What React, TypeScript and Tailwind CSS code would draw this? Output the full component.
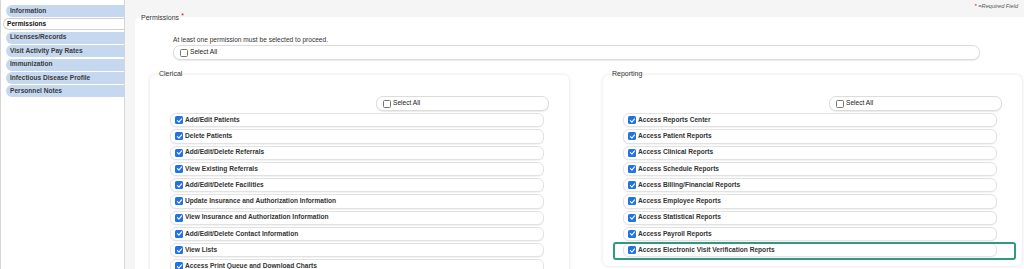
import React from "react";

const clerical = [
  "Add/Edit Patients",
  "Delete Patients",
  "Add/Edit/Delete Referrals",
  "View Existing Referrals",
  "Add/Edit/Delete Facilities",
  "Update Insurance and Authorization Information",
  "View Insurance and Authorization Information",
  "Add/Edit/Delete Contact Information",
  "View Lists",
  "Access Print Queue and Download Charts",
];

const reporting = [
  "Access Reports Center",
  "Access Patient Reports",
  "Access Clinical Reports",
  "Access Schedule Reports",
  "Access Billing/Financial Reports",
  "Access Employee Reports",
  "Access Statistical Reports",
  "Access Payroll Reports",
  "Access Electronic Visit Verification Reports",
];

const tabs = [
  "Information",
  "Permissions",
  "Licenses/Records",
  "Visit Activity Pay Rates",
  "Immunization",
  "Infectious Disease Profile",
  "Personnel Notes",
];

function Checked() {
  return (
    <span className="flex h-[8px] w-[8px] shrink-0 items-center justify-center rounded-[1.5px] bg-[#1f73e6]">
      <svg viewBox="0 0 10 10" className="h-[7px] w-[7px]">
        <polyline points="2,5.3 4.2,7.4 8,2.8" fill="none" stroke="#fff" strokeWidth="1.6" strokeLinecap="round" strokeLinejoin="round" />
      </svg>
    </span>
  );
}

function Unchecked() {
  return <span className="h-[8px] w-[8px] shrink-0 rounded-[1.5px] border border-[#777] bg-white" />;
}

function SelectAllBox({ className }: { className: string }) {
  return (
    <div className={"flex h-[15px] shrink-0 items-center gap-[2px] rounded-[7px] border border-[#dcdcdc] bg-white pl-[6px] shadow-[0_1px_1px_rgba(0,0,0,0.08)] " + className}>
      <Unchecked />
      <span className="text-[6.6px] leading-none text-[#222]">Select All</span>
    </div>
  );
}

function Row({ label, highlight }: { label: string; highlight?: boolean }) {
  return (
    <div className="relative flex h-[14.25px] shrink-0 items-center gap-[2px] rounded-[6px] border border-[#e2e2e2] bg-white pl-[4px] shadow-[0_1px_1px_rgba(0,0,0,0.05)]">
      <Checked />
      <span className="text-[6.6px] font-bold leading-none text-[#333]">{label}</span>
      {highlight && (
        <div className="pointer-events-none absolute -bottom-[4px] -left-[11px] -right-[20px] -top-[2px] rounded-[3px] border-2 border-[#2e9b7c]" />
      )}
    </div>
  );
}

function Column({ title, items, last }: { title: string; items: string[]; last?: boolean }) {
  return (
    <div className="flex w-[419px] shrink-0 flex-col">
      <div className="relative z-10 h-[8px] shrink-0 pl-[9px] text-[7px] leading-[8px] text-[#333]">{title}</div>
      <div className="-mt-[3px] flex shrink-0 flex-col rounded-[6px] bg-white pb-[9px] pt-[21px] shadow-[0_0_4px_rgba(0,0,0,0.12)]">
        <SelectAllBox className="ml-[226px] mr-[20px]" />
        <div className="mt-[2px] flex flex-col gap-[2px] pl-[20px] pr-[25px]">
          {items.map((it, i) => (
            <Row key={it} label={it} highlight={last && i === items.length - 1} />
          ))}
        </div>
      </div>
    </div>
  );
}

export default function App() {
  return (
    <div className="flex h-[269px] w-[1024px] overflow-hidden bg-[#f5f5f5] font-['Liberation_Sans',Arial,sans-serif]">
      <aside className="flex w-[125px] shrink-0 flex-col gap-[1.4px] border-l border-r border-[#d6d6d6] bg-white pt-[5px]">
        {tabs.map((t) =>
          t === "Permissions" ? (
            <div key={t} className="ml-[2px] flex h-[12px] shrink-0 items-center rounded-l-[6px] border border-r-0 border-[#cfcfcf] bg-white pl-[3px]">
              <span className="text-[6.6px] font-bold leading-none text-[#111]">{t}</span>
            </div>
          ) : (
            <div key={t} className="ml-[5px] flex h-[12px] shrink-0 items-center rounded-l-[6px] bg-[#c5d8ef] pl-[4px]">
              <span className="text-[6.6px] font-bold leading-none text-[#3a3a3a]">{t}</span>
            </div>
          )
        )}
      </aside>
      <main className="flex min-w-0 flex-1 flex-col pl-[10px]">
        <div className="flex h-[14px] shrink-0 items-center justify-end pr-[6px]">
          <span className="text-[5.6px] italic leading-none text-[#555]">
            <span className="text-[#d00]">*</span> =Required Field
          </span>
        </div>
        <div className="relative z-10 h-[8px] shrink-0 pl-[6px] text-[7px] leading-[8px] text-[#333]">
          Permissions<span className="relative -top-[2px] ml-[2px] text-[#d00]">*</span>
        </div>
        <div className="-mt-[5px] flex flex-1 shrink-0 flex-col rounded-tl-[6px] bg-white pl-[15px] pt-[19px]">
          <div className="shrink-0 pl-[23px] text-[6.6px] leading-[8px] text-[#333]">At least one permission must be selected to proceed.</div>
          <SelectAllBox className="ml-[23px] mr-[44px] mt-[1px]" />
          <div className="mt-[10px] flex shrink-0 gap-[34px]">
            <Column title="Clerical" items={clerical} />
            <Column title="Reporting" items={reporting} last />
          </div>
        </div>
      </main>
    </div>
  );
}
